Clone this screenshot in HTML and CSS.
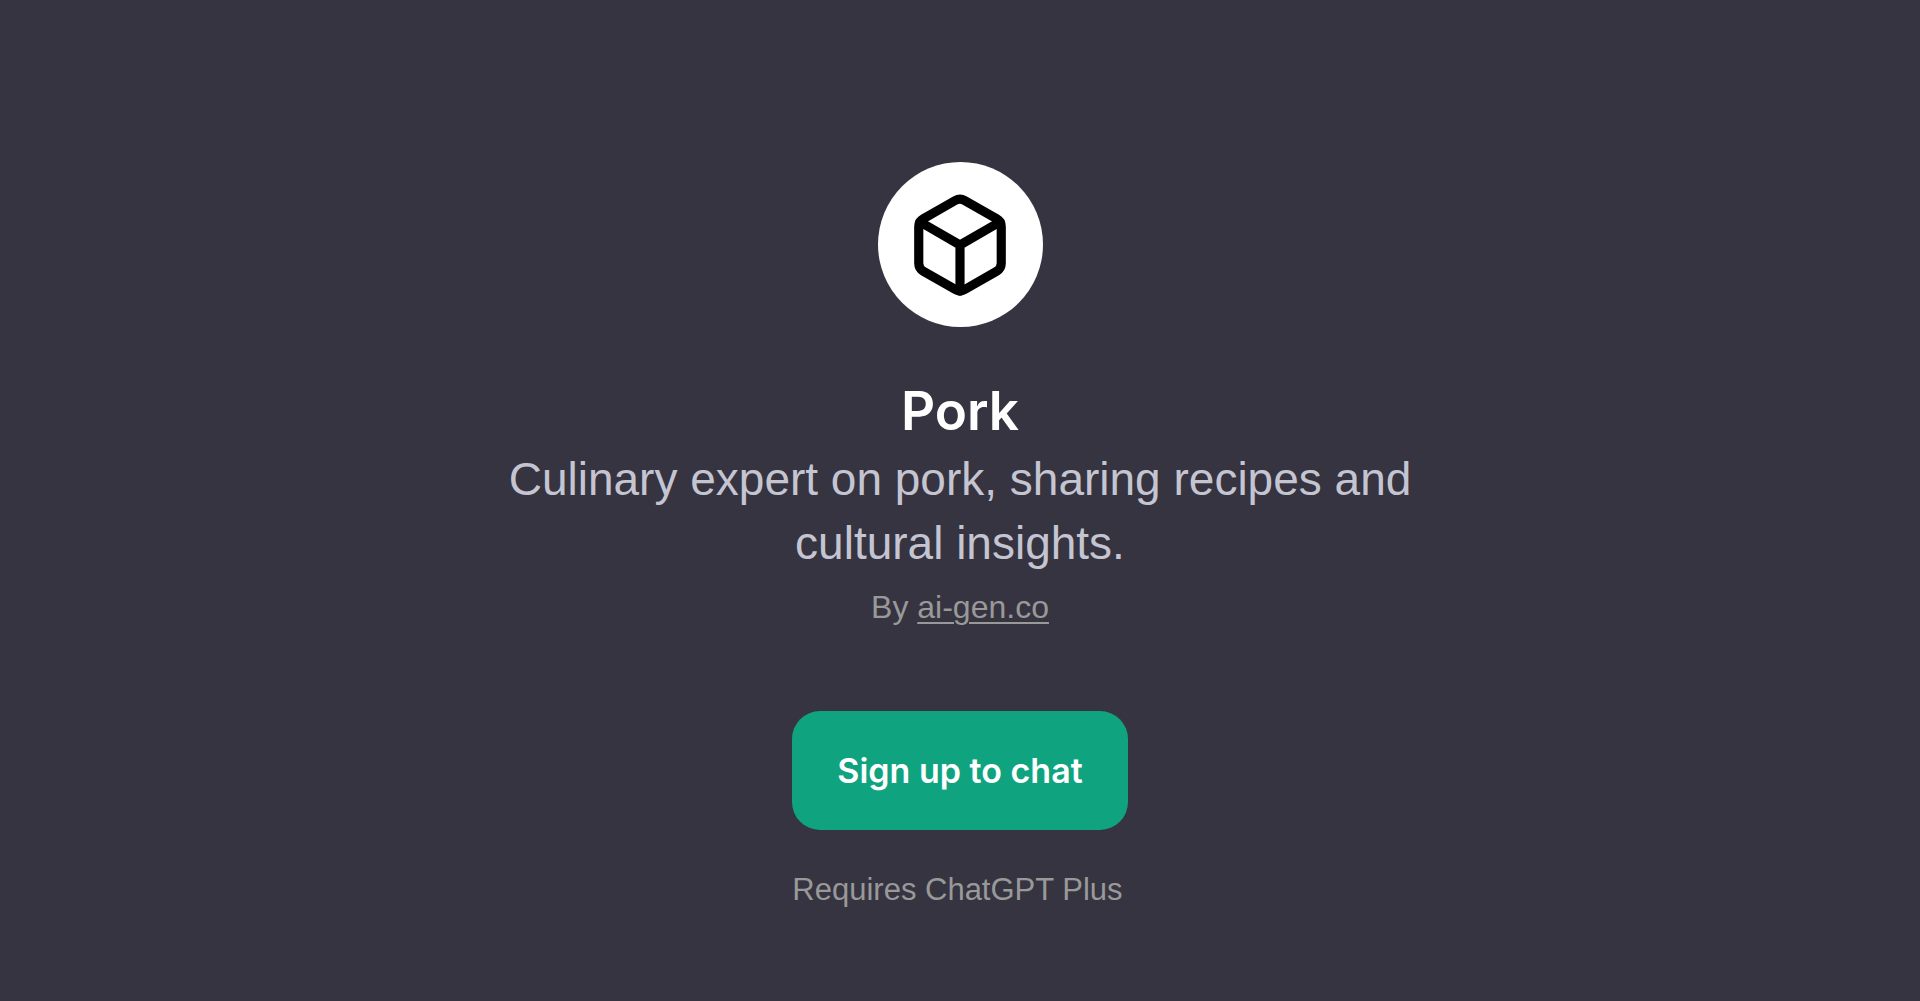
FILE: index.html
```html
<!DOCTYPE html>
<html lang="en">
<head>
<meta charset="utf-8">
<title>Pork</title>
<link rel="stylesheet" href="styles.css">
</head>
<body>
<main class="card">
  <div class="avatar">
    <svg class="cube" viewBox="0 0 24 24" fill="none" stroke="currentColor" stroke-width="2" stroke-linecap="round" stroke-linejoin="round" aria-hidden="true">
      <path d="M21 16V8a2 2 0 0 0-1-1.73l-7-4a2 2 0 0 0-2 0l-7 4A2 2 0 0 0 3 8v8a2 2 0 0 0 1 1.73l7 4a2 2 0 0 0 2 0l7-4A2 2 0 0 0 21 16z"/>
      <path d="M3.27 6.96 12 12.01l8.73-5.05M12 22.08V12"/>
    </svg>
  </div>
  <h1 class="title">Pork</h1>
  <p class="description">Culinary expert on pork, sharing recipes and cultural insights.</p>
  <p class="author">By <a class="author-link" href="#">ai-gen.co</a></p>
  <div class="actions">
    <button class="signup" type="button">Sign up to chat</button>
    <p class="note">Requires ChatGPT Plus</p>
  </div>
</main>
</body>
</html>
```

FILE: styles.css
```css
* {
  box-sizing: border-box;
}

body {
  margin: 0;
  min-height: 100vh;
  background: #353440;
  color: #fff;
  font-family: "Liberation Sans", Arial, sans-serif;
}

h1,
p {
  margin: 0;
}

.card {
  display: flex;
  flex-direction: column;
  align-items: center;
  padding: 162px 24px 64px;
}

.avatar {
  display: grid;
  place-items: center;
  width: 165px;
  height: 165px;
  border-radius: 50%;
  background: #fff;
  color: #000;
}

.cube {
  width: 110px;
  height: 110px;
}

.title {
  margin-top: 48px;
  font-family: Inter, sans-serif;
  font-size: 53px;
  font-weight: 600;
  line-height: 72px;
}

.description {
  max-width: 940px;
  font-size: 46px;
  line-height: 64px;
  text-align: center;
  color: #c5c5d2;
}

.author {
  margin-top: 8px;
  font-size: 32px;
  line-height: 48px;
  color: #999;
}

.author-link {
  color: inherit;
  text-decoration-thickness: 2px;
  text-underline-offset: 4px;
}

.actions {
  margin-top: 80px;
}

.signup {
  display: block;
  padding: 36px 45px;
  border: 0;
  border-radius: 28px;
  background: #10a37f;
  color: #fff;
  font-family: Inter, sans-serif;
  font-size: 34px;
  font-weight: 600;
  line-height: 47px;
}

.note {
  margin-top: 36px;
  font-size: 31px;
  line-height: 48px;
  color: #999;
}
```
